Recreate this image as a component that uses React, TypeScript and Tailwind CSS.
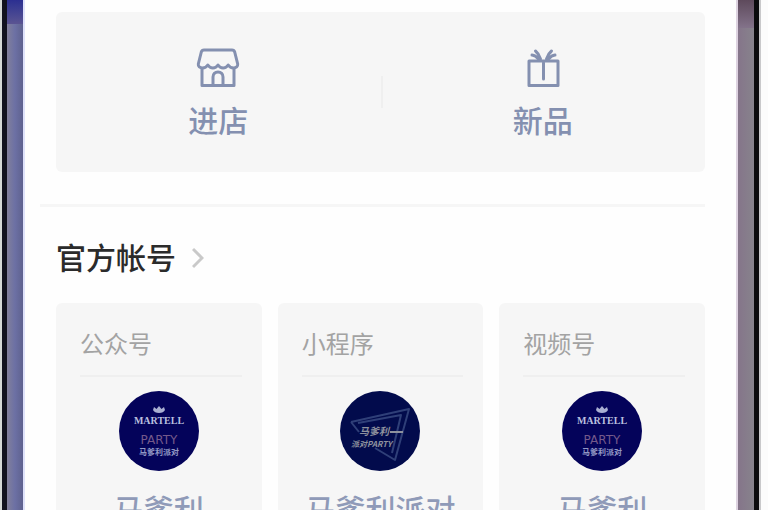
import React from "react";

type Account = {
  type: string;
  name: string;
  logo: "party" | "plane";
};

const accounts: Account[] = [
  { type: "公众号", name: "马爹利", logo: "party" },
  { type: "小程序", name: "马爹利派对", logo: "plane" },
  { type: "视频号", name: "马爹利", logo: "party" },
];

const ShopIcon: React.FC = () => (
  <svg
    className="w-11 h-10"
    viewBox="0 0 44 40"
    fill="none"
    stroke="#8490b0"
    strokeWidth="3"
    strokeLinejoin="round"
    strokeLinecap="round"
    aria-hidden="true"
  >
    <path d="M8 2h28c1.500 0 2.300.7 2.700 2l3 12c.3 2.500-1.600 4-4.200 4-2.500 0-4-1-5.300-3-1.300 2-2.900 3-5.100 3s-3.800-1-5.100-3c-1.300 2-2.900 3-5.100 3s-3.800-1-5.100-3c-1.300 2-2.800 3-5.300 3-2.600 0-4.500-1.500-4.200-4l3-12C5.700 2.700 6.500 2 8 2z" />
    <path d="M6 21v16.500h32V21" />
    <path d="M17 37v-8c0-3 2-5 5-5s5 2 5 5v8" />
  </svg>
);

const GiftIcon: React.FC = () => (
  <svg
    className="w-11 h-10"
    viewBox="0 0 44 40"
    fill="none"
    stroke="#8490b0"
    strokeWidth="3"
    strokeLinejoin="round"
    strokeLinecap="round"
    aria-hidden="true"
  >
    <path d="M8 13h29v24.500H8zM22.500 15v16" />
    <path d="M19.500 11c-1-3.500-2.500-6-5-8M25.500 11c1-3.500 2.500-6 5-8M11 7c2.500.2 4.500 1.500 6.500 4M34 7c-2.500.2-4.500 1.500-6.500 4" />
  </svg>
);

const PartyLogo: React.FC = () => (
  <svg className="w-20 h-20" viewBox="0 0 80 80" aria-hidden="true">
    <circle cx="40" cy="40" r="40" fill="#04035a" />
    <path
      d="M35 16l2.500 2L40 15l2.500 3 2.500-2 1 3c-1 2-3 3-6 3s-5-1-6-3z"
      fill="#a9afd2"
    />
    <text
      x="40"
      y="33"
      textAnchor="middle"
      fontFamily="Liberation Serif, serif"
      fontWeight="700"
      fontSize="10"
      fill="#b9bfdf"
    >
      MARTELL
    </text>
    <text
      x="40"
      y="53"
      textAnchor="middle"
      fontFamily="DejaVu Sans, sans-serif"
      fontSize="12"
      fill="#75598a"
    >
      PARTY
    </text>
    <text
      x="40"
      y="64"
      textAnchor="middle"
      fontFamily="Noto Sans CJK SC, sans-serif"
      fontWeight="700"
      fontSize="8"
      fill="#9298c4"
    >
      马爹利派对
    </text>
  </svg>
);

const PlaneLogo: React.FC = () => (
  <svg className="w-20 h-20" viewBox="0 0 80 80" aria-hidden="true">
    <circle cx="40" cy="40" r="40" fill="#020b4c" />
    <path
      d="M11 31L69 18L55 69L35 57M11 31L19 41M18 32L61 24L52 62"
      fill="none"
      stroke="#2f3f78"
      strokeWidth="2"
      strokeLinejoin="round"
    />
    <g
      fontFamily="Noto Sans CJK SC, sans-serif"
      fontWeight="700"
      fontStyle="italic"
      fill="#8e929e"
    >
      <text x="19" y="44" fontSize="10">
        马爹利
      </text>
      <text x="11" y="56" fontSize="8">
        派对PARTY
      </text>
    </g>
    <path d="M50 41h13" stroke="#8e929e" strokeWidth="2" />
  </svg>
);

const App: React.FC = () => {
  return (
    <div className="h-screen overflow-hidden flex bg-[#fbfbfb] font-['Liberation_Sans','Noto_Sans_CJK_SC',sans-serif]">
      {/* left edge of the phone */}
      <div className="flex shrink-0" aria-hidden="true">
        <div className="w-0.5 bg-[#d5d9d7]" />
        <div className="w-[5px] bg-[#11121f]" />
        <div className="w-4 bg-linear-to-r from-[#817f9b] via-[#6c70a4] to-[#5f628f]">
          <div className="h-6 bg-linear-to-b from-[#2c2f91] to-[#5b5492]" />
        </div>
        <div className="w-0.5 bg-[#dfe2fb]" />
      </div>

      <main className="flex-1 min-w-0 bg-[#fefefe] px-[31px] pt-3">
        <nav className="relative grid grid-cols-2 h-40 rounded-md bg-[#f6f6f6] text-[#8490b0] text-[30px] leading-10 font-medium">
          <button className="flex flex-col items-center pt-9">
            <ShopIcon />
            <span className="mt-3.5">进店</span>
          </button>
          <button className="flex flex-col items-center pt-9">
            <GiftIcon />
            <span className="mt-3.5">新品</span>
          </button>
          <span className="absolute left-1/2 top-1/2 -translate-y-1/2 w-0.5 h-8 bg-[#efefef]" />
        </nav>

        <hr className="mt-8 -ml-4 border-t-[3px] border-[#f6f6f6]" />

        <section>
          <h2 className="mt-8 text-[30px] leading-10 font-medium text-[#2b2b2b]">
            <a href="#accounts" className="flex items-center gap-4">
              官方帐号
              <svg
                className="w-3 h-6"
                viewBox="0 0 12 24"
                fill="none"
                stroke="#c9c9c9"
                strokeWidth="3"
                aria-hidden="true"
              >
                <path d="M1 2l9 9-9 9" />
              </svg>
            </a>
          </h2>

          <ul id="accounts" className="mt-6 grid grid-cols-3 gap-4">
            {accounts.map((account, index) => (
              <li
                key={index}
                className="h-64 pt-[26px] rounded-md bg-[#f6f6f6] flex flex-col"
              >
                <p className="pl-6 text-2xl leading-8 text-[#a3a3a3]">
                  {account.type}
                </p>
                <hr className="mt-3.5 ml-6 mr-5 border-t-2 border-[#efefef]" />
                <a href="#account" className="mt-3.5 flex flex-col items-center">
                  {account.logo === "party" ? <PartyLogo /> : <PlaneLogo />}
                  <span className="mt-5 text-[30px] leading-10 text-[#8f9ab8] font-medium whitespace-nowrap">
                    {account.name}
                  </span>
                </a>
              </li>
            ))}
          </ul>
        </section>
      </main>

      {/* right edge of the phone */}
      <div className="flex shrink-0" aria-hidden="true">
        <div className="w-0.5 bg-[#ddd2e0]" />
        <div className="w-4 bg-linear-to-r from-[#85758a] to-[#87838c]">
          <div className="h-7 bg-linear-to-b from-[#5e4a5c] to-[#83738a]" />
        </div>
        <div className="w-[5px] bg-[#0b0b0d]" />
        <div className="w-0.5 bg-[#c9c9cb]" />
        <div className="w-[7px] bg-[#fcfcfc]" />
      </div>
    </div>
  );
};

export default App;
